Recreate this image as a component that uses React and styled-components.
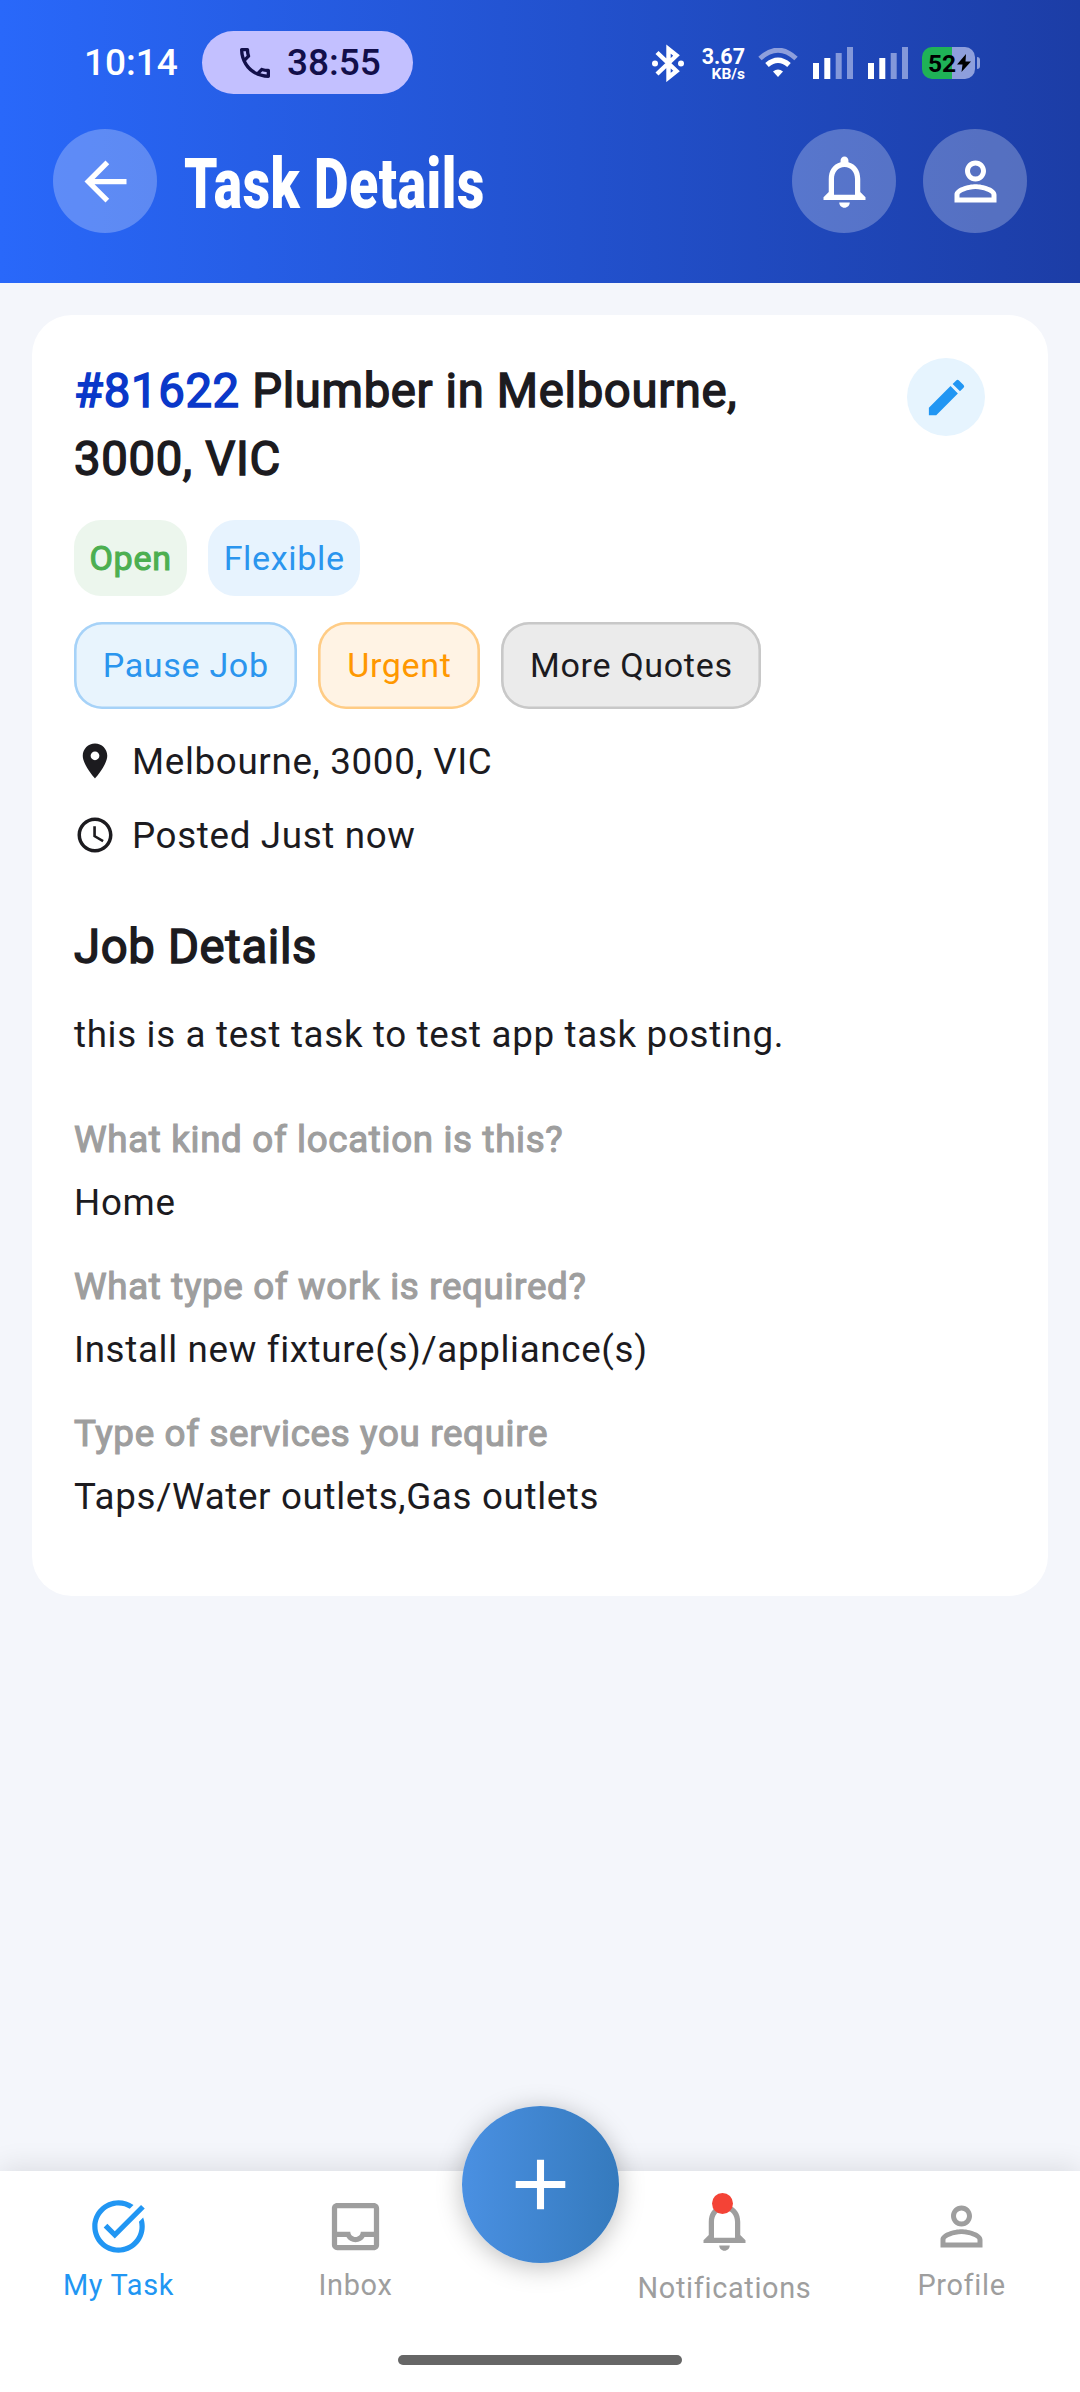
// App.jsx
import React from 'react';
import styled, { createGlobalStyle } from 'styled-components';
import {
  MdAccessTime,
  MdAdd,
  MdArrowBack,
  MdEdit,
  MdLocationOn,
  MdNotificationsNone,
  MdOutlineCall,
  MdOutlineInbox,
  MdPersonOutline,
  MdTaskAlt
} from 'react-icons/md';

const GlobalStyle = createGlobalStyle`
  * {
    box-sizing: border-box;
    margin: 0;
    padding: 0;
  }

  body {
    font-family: Roboto, 'Noto Sans', sans-serif;
    background: #f4f6fb;
    color: #1c1b1f;
  }

  svg {
    display: block;
    flex-shrink: 0;
  }
`;

const Screen = styled.div`
  display: flex;
  flex-direction: column;
  width: 1080px;
  height: 2392px;
  overflow: hidden;
  background: #f4f6fb;
`;

const Header = styled.header`
  height: 283px;
  background: linear-gradient(90deg, #2968fa 0%, #1c3da6 100%);
  color: #fff;
`;

const StatusBar = styled.div`
  display: flex;
  align-items: center;
  height: 125px;
  padding: 0 100px 0 84px;
`;

const Clock = styled.span`
  width: 118px;
  font-size: 37px;
  font-weight: 500;
`;

const CallPill = styled.div`
  display: flex;
  align-items: center;
  gap: 12px;
  width: 211px;
  height: 63px;
  padding-left: 33px;
  border-radius: 32px;
  background: #c3c0ff;
  color: #120f4a;
  font-size: 37px;
  font-weight: 500;
`;

const StatusIcons = styled.div`
  display: flex;
  align-items: center;
  margin-left: auto;
  padding-top: 1px;
`;

const NetSpeed = styled.div`
  display: flex;
  flex-direction: column;
  align-items: flex-end;
  width: 61px;
  margin-right: 13px;
  padding-top: 3px;
  font-weight: 700;
  line-height: 1;
`;

const SpeedValue = styled.span`
  font-size: 21.5px;
  line-height: 20px;
`;

const SpeedUnit = styled.span`
  font-size: 15.5px;
  line-height: 15px;
`;

const SignalIcon = styled.svg`
  margin-left: 15px;
`;

const Battery = styled.div`
  display: flex;
  align-items: center;
  gap: 1px;
  width: 53px;
  height: 32px;
  margin-left: 14px;
  padding-left: 6px;
  border-radius: 10px;
  background: linear-gradient(90deg, #1fb257 57%, #8e9fdc 57%);
  color: #000;
  font-size: 24.5px;
  font-weight: 700;
`;

const BatteryTip = styled.div`
  width: 3px;
  height: 12px;
  margin-left: 2px;
  border-radius: 0 3px 3px 0;
  background: #8e9fdc;
`;

const AppBar = styled.div`
  display: flex;
  align-items: center;
  gap: 27px;
  padding: 4px 53px 0;
`;

const RoundButton = styled.button`
  display: flex;
  align-items: center;
  justify-content: center;
  flex-shrink: 0;
  width: ${props => props.$size || 104}px;
  height: ${props => props.$size || 104}px;
  border: none;
  border-radius: 50%;
  background: ${props => props.$bg || 'rgba(255, 255, 255, 0.25)'};
  color: ${props => props.$color || '#fff'};
`;

const PageTitle = styled.h1`
  flex: 1;
  padding-top: 5px;
  font-size: 70px;
  font-weight: 900;
  line-height: 82px;
  letter-spacing: 0.8px;
  white-space: nowrap;
  transform: scaleX(0.76);
  transform-origin: left center;
`;

const Content = styled.main`
  flex: 1;
  padding: 32px 32px 0;
`;

const Card = styled.section`
  height: 1281px;
  padding: 42px;
  border-radius: 40px;
  background: #fff;
`;

const CardTop = styled.div`
  display: flex;
  justify-content: space-between;
  align-items: flex-start;
  padding-right: 21px;
`;

const TaskTitle = styled.h2`
  width: 700px;
  font-size: 47.25px;
  font-weight: 400;
  line-height: 68px;
  letter-spacing: 0.66px;
  -webkit-text-stroke: 1.5px currentColor;
`;

const TaskId = styled.span`
  color: #0a38c9;
`;

const EditButton = styled(RoundButton)`
  margin-top: 1px;
`;

const TagRow = styled.div`
  display: flex;
  gap: 21px;
  margin-top: ${props => props.$top}px;
`;

const Tag = styled.span`
  height: 76px;
  padding: 0 15.5px;
  border-radius: 27px;
  background: ${props => props.$bg};
  color: ${props => props.$color};
  font-size: 34.1px;
  line-height: 76px;
  letter-spacing: 0.66px;
  -webkit-text-stroke: ${props => (props.$bold ? '1.1px' : '0')} currentColor;
`;

const ActionChip = styled.button`
  height: 87px;
  padding: 0 28.7px 2px;
  border: none;
  border-radius: 28px;
  background: ${props => props.$bg};
  box-shadow: inset 0 0 0 2.6px ${props => props.$border};
  color: ${props => props.$color};
  font-family: inherit;
  font-size: 34.1px;
  letter-spacing: 0.66px;
`;

const MetaRow = styled.div`
  display: flex;
  align-items: center;
  gap: 16px;
  height: 74px;
  font-size: 36.75px;
  letter-spacing: 0.66px;
`;

const MetaList = styled.div`
  margin-top: 15px;
`;

const SectionTitle = styled.h3`
  margin-top: 41px;
  font-size: 47.25px;
  font-weight: 400;
  line-height: 68px;
  letter-spacing: 0.66px;
  -webkit-text-stroke: 1.5px currentColor;
`;

const Text = styled.p`
  font-size: 36.75px;
  line-height: 52px;
  letter-spacing: 0.66px;
`;

const Description = styled(Text)`
  margin-top: 28px;
`;

const QuestionList = styled.dl`
  display: flex;
  flex-direction: column;
  gap: 32px;
  margin-top: 53px;
`;

const Question = styled.dt`
  margin-bottom: 11px;
  color: #9e9e9e;
  font-size: 36.75px;
  line-height: 52px;
  letter-spacing: 0.66px;
  -webkit-text-stroke: 1.15px currentColor;
`;

const BottomNav = styled.nav`
  position: relative;
  display: grid;
  grid-template-columns: 237px 237px 132px 237px 237px;
  align-items: start;
  height: 221px;
  background: #fff;
  box-shadow: 0 -4px 26px rgba(0, 0, 0, 0.1);
`;

const NavItem = styled.a`
  display: flex;
  flex-direction: column;
  align-items: center;
  gap: ${props => (props.$badge ? 12 : 7)}px;
  padding-top: ${props => (props.$badge ? 22 : 24)}px;
  color: ${props => (props.$active ? '#2196f3' : '#9e9e9e')};
  font-size: 28.9px;
  line-height: 40px;
  letter-spacing: 0.66px;
`;

const IconBox = styled.span`
  position: relative;
`;

const Badge = styled.span`
  position: absolute;
  top: 0;
  left: 19px;
  width: 21px;
  height: 21px;
  border-radius: 50%;
  background: #f44336;
`;

const AddButton = styled(RoundButton)`
  margin: -65px -12.5px 0;
  background: linear-gradient(90deg, #4a90e2, #357abd);
  box-shadow: 0 4px 26px rgba(0, 0, 0, 0.26);
`;

const HomeIndicator = styled.div`
  position: absolute;
  bottom: 27px;
  left: 398px;
  width: 284px;
  height: 10px;
  border-radius: 5px;
  background: #666;
`;

const tags = [
  { label: 'Open', bg: '#ecf6ed', color: '#4caf50', bold: true },
  { label: 'Flexible', bg: '#e7f3fe', color: '#2b95ee' }
];

const actions = [
  { label: 'Pause Job', bg: '#e8f4fd', border: '#a6d2f8', color: '#2b95ee' },
  { label: 'Urgent', bg: '#fff3e4', border: '#ffcc85', color: '#ff9800' },
  { label: 'More Quotes', bg: '#ebebeb', border: '#c8c8c8', color: '#1c1b1f' }
];

const questions = [
  { q: 'What kind of location is this?', a: 'Home' },
  { q: 'What type of work is required?', a: 'Install new fixture(s)/appliance(s)' },
  { q: 'Type of services you require', a: 'Taps/Water outlets,Gas outlets' }
];

function Bluetooth() {
  return (
    <svg width="32" height="38" viewBox="0 0 32 38" fill="none">
      <path
        d="M5 8.5 L24.5 27 L16.5 33.5 V5 L24.5 11.5 L5 30"
        stroke="#fff"
        strokeWidth="4.4"
      />
      <circle cx="3" cy="19.5" r="3" fill="#fff" />
      <circle cx="29" cy="19.5" r="3" fill="#fff" />
    </svg>
  );
}

function Wifi() {
  return (
    <svg width="40" height="30" viewBox="0 0 40 30" fill="none">
      <path d="M2 10.5 Q20 -6 38 10.5" stroke="#8e9fdc" strokeWidth="5" />
      <path d="M9 17 Q20 7.5 31 17" stroke="#fff" strokeWidth="5.4" />
      <path d="M15 23.5 Q20 19.5 25 23.5 L20 29 Z" fill="#fff" />
    </svg>
  );
}

function Signal() {
  return (
    <SignalIcon width="40" height="32" viewBox="0 0 40 32">
      <path d="M0 16h6v16H0zM11.3 11h6v21h-6z" fill="#fff" />
      <path d="M22.7 6h6v26h-6zM34 0h6v32h-6z" fill="#8398da" />
    </SignalIcon>
  );
}

function Bolt() {
  return (
    <svg width="14" height="18" viewBox="0 0 14 18">
      <path d="M9 0 L0 10.5 H5.5 L4.5 18 L14 7.5 H8.500 Z" fill="#000" />
    </svg>
  );
}

function App() {
  return (
    <>
      <GlobalStyle />
      <Screen>
        <Header>
          <StatusBar>
            <Clock>10:14</Clock>
            <CallPill>
              <MdOutlineCall size={40} />
              <span>38:55</span>
            </CallPill>
            <StatusIcons>
              <Bluetooth />
              <NetSpeed>
                <SpeedValue>3.67</SpeedValue>
                <SpeedUnit>KB/s</SpeedUnit>
              </NetSpeed>
              <Wifi />
              <Signal />
              <Signal />
              <Battery>
                <span>52</span>
                <Bolt />
              </Battery>
              <BatteryTip />
            </StatusIcons>
          </StatusBar>
          <AppBar>
            <RoundButton aria-label="Back">
              <MdArrowBack size={63} />
            </RoundButton>
            <PageTitle>Task Details</PageTitle>
            <RoundButton aria-label="Notifications">
              <MdNotificationsNone size={63} />
            </RoundButton>
            <RoundButton aria-label="Profile">
              <MdPersonOutline size={63} />
            </RoundButton>
          </AppBar>
        </Header>

        <Content>
          <Card>
            <CardTop>
              <TaskTitle>
                <TaskId>#81622</TaskId> Plumber in Melbourne,
                <br />
                3000, VIC
              </TaskTitle>
              <EditButton $size={78} $bg="#e6f4fe" $color="#2196f3" aria-label="Edit">
                <MdEdit size={47} />
              </EditButton>
            </CardTop>

            <TagRow $top={27}>
              {tags.map(tag => (
                <Tag key={tag.label} $bg={tag.bg} $color={tag.color} $bold={tag.bold}>
                  {tag.label}
                </Tag>
              ))}
            </TagRow>

            <TagRow $top={26}>
              {actions.map(action => (
                <ActionChip
                  key={action.label}
                  $bg={action.bg}
                  $border={action.border}
                  $color={action.color}
                >
                  {action.label}
                </ActionChip>
              ))}
            </TagRow>

            <MetaList>
              <MetaRow>
                <MdLocationOn size={42} />
                <span>Melbourne, 3000, VIC</span>
              </MetaRow>
              <MetaRow>
                <MdAccessTime size={42} />
                <span>Posted Just now</span>
              </MetaRow>
            </MetaList>

            <SectionTitle>Job Details</SectionTitle>
            <Description>this is a test task to test app task posting.</Description>

            <QuestionList>
              {questions.map(item => (
                <div key={item.q}>
                  <Question>{item.q}</Question>
                  <Text as="dd">{item.a}</Text>
                </div>
              ))}
            </QuestionList>
          </Card>
        </Content>

        <BottomNav>
          <NavItem $active>
            <MdTaskAlt size={63} />
            <span>My Task</span>
          </NavItem>
          <NavItem>
            <MdOutlineInbox size={63} />
            <span>Inbox</span>
          </NavItem>
          <AddButton $size={157} aria-label="Add task">
            <MdAdd size={85} />
          </AddButton>
          <NavItem $badge>
            <IconBox>
              <MdNotificationsNone size={63} />
              <Badge />
            </IconBox>
            <span>Notifications</span>
          </NavItem>
          <NavItem>
            <MdPersonOutline size={63} />
            <span>Profile</span>
          </NavItem>
          <HomeIndicator />
        </BottomNav>
      </Screen>
    </>
  );
}

export default App;
